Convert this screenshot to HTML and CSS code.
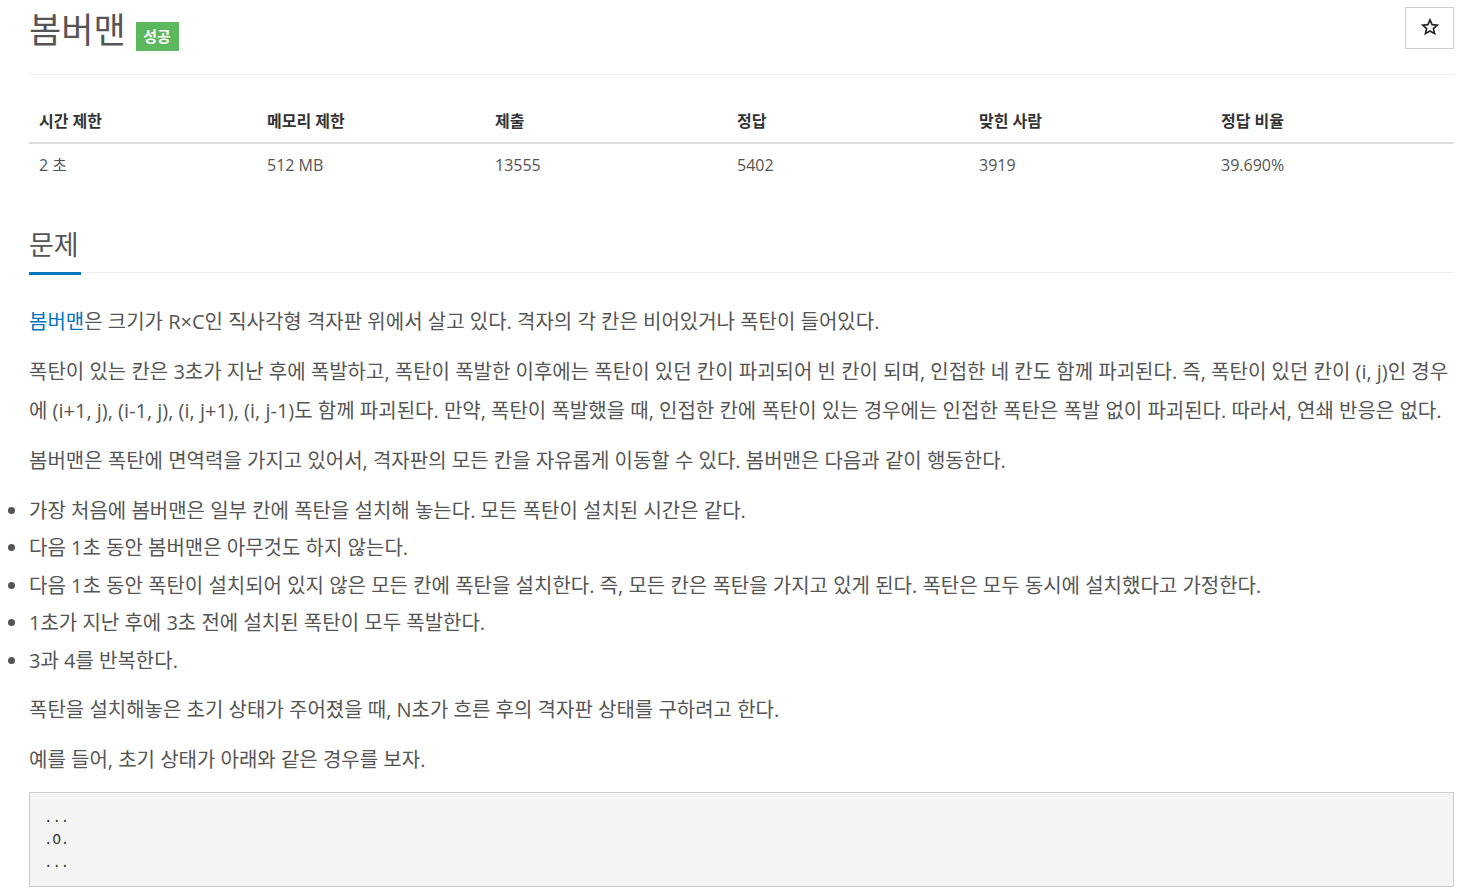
FILE: index.html
```html
<!DOCTYPE html>
<html lang="ko">
<head>
<meta charset="utf-8">
<title>봄버맨</title>
<link rel="stylesheet" href="styles.css">
</head>
<body>
<div class="page">
  <div class="header">
    <h1 class="title">봄버맨 <span class="badge">성공</span></h1>
    <button class="star" type="button"><svg width="18" height="18" viewBox="0 0 24 24"><path d="M12 2.5l2.8 6.4 6.9.6-5.2 4.6 1.6 6.8L12 17.3l-6.1 3.6 1.6-6.8-5.2-4.6 6.9-.6z" fill="none" stroke="#222" stroke-width="2.2" stroke-linejoin="miter"/></svg></button>
  </div>

  <table class="info">
    <thead>
      <tr>
        <th class="c1">시간 제한</th>
        <th class="c2">메모리 제한</th>
        <th class="c3">제출</th>
        <th class="c4">정답</th>
        <th class="c5">맞힌 사람</th>
        <th class="c6">정답 비율</th>
      </tr>
    </thead>
    <tbody>
      <tr>
        <td>2 초</td>
        <td>512 MB</td>
        <td>13555</td>
        <td>5402</td>
        <td>3919</td>
        <td>39.690%</td>
      </tr>
    </tbody>
  </table>

  <section class="problem">
    <div class="headline"><h2>문제</h2></div>
    <div class="body">
      <p><a class="link" href="#">봄버맨</a>은 크기가 R×C인 직사각형 격자판 위에서 살고 있다. 격자의 각 칸은 비어있거나 폭탄이 들어있다.</p>
      <p>폭탄이 있는 칸은 3초가 지난 후에 폭발하고, 폭탄이 폭발한 이후에는 폭탄이 있던 칸이 파괴되어 빈 칸이 되며, 인접한 네 칸도 함께 파괴된다. 즉, 폭탄이 있던 칸이 (i, j)인 경우에 (i+1, j), (i-1, j), (i, j+1), (i, j-1)도 함께 파괴된다. 만약, 폭탄이 폭발했을 때, 인접한 칸에 폭탄이 있는 경우에는 인접한 폭탄은 폭발 없이 파괴된다. 따라서, 연쇄 반응은 없다.</p>
      <p>봄버맨은 폭탄에 면역력을 가지고 있어서, 격자판의 모든 칸을 자유롭게 이동할 수 있다. 봄버맨은 다음과 같이 행동한다.</p>
      <ul>
        <li>가장 처음에 봄버맨은 일부 칸에 폭탄을 설치해 놓는다. 모든 폭탄이 설치된 시간은 같다.</li>
        <li>다음 1초 동안 봄버맨은 아무것도 하지 않는다.</li>
        <li>다음 1초 동안 폭탄이 설치되어 있지 않은 모든 칸에 폭탄을 설치한다. 즉, 모든 칸은 폭탄을 가지고 있게 된다. 폭탄은 모두 동시에 설치했다고 가정한다.</li>
        <li>1초가 지난 후에 3초 전에 설치된 폭탄이 모두 폭발한다.</li>
        <li>3과 4를 반복한다.</li>
      </ul>
      <p>폭탄을 설치해놓은 초기 상태가 주어졌을 때, N초가 흐른 후의 격자판 상태를 구하려고 한다.</p>
      <p>예를 들어, 초기 상태가 아래와 같은 경우를 보자.</p>
      <pre class="code">...
.O.
...</pre>
    </div>
  </section>
</div>
</body>
</html>
```

FILE: styles.css
```css
html, body {
  margin: 0;
  padding: 0;
  background: #fff;
}

body {
  font-family: "Open Sans", "Noto Sans CJK KR", sans-serif;
  color: #555;
}

.page {
  padding: 0 8px 0 29px;
}

.header {
  display: flex;
  justify-content: space-between;
  align-items: flex-start;
  height: 74px;
  border-bottom: 1px solid #eee;
}

.title {
  margin: 9px 0 0 0;
  font-size: 35px;
  line-height: 40px;
  font-weight: 400;
  color: #555;
  display: flex;
  align-items: center;
}

.badge {
  display: inline-block;
  margin-left: 10px;
  margin-top: 13px;
  width: 43px;
  height: 29px;
  line-height: 29px;
  text-align: center;
  background: #5cb85c;
  color: #fff;
  font-size: 15px;
  font-weight: 700;
}

.star {
  margin-top: 7px;
  width: 49px;
  height: 42px;
  border: 1px solid #ccc;
  background: #fff;
  padding: 0;
  display: flex;
  align-items: center;
  justify-content: center;
}

.star svg {
  display: block;
  margin-top: -2px;
}

.info {
  width: 100%;
  table-layout: fixed;
  border-collapse: collapse;
  margin-top: 26px;
}

.info th,
.info td {
  text-align: left;
  padding: 0 10px;
}

.info th {
  font-size: 16px;
  font-weight: 700;
  color: #333;
  line-height: 22px;
  padding-top: 9px;
  padding-bottom: 10px;
  border-bottom: 2px solid #ddd;
}

.info td {
  font-size: 16px;
  line-height: 22px;
  padding-top: 10px;
  padding-bottom: 10px;
}

.c1 { width: 208px; }
.c2 { width: 208px; }
.c3 { width: 222px; }
.c4 { width: 222px; }
.c5 { width: 222px; }

.problem {
  margin-top: 41px;
}

.headline {
  border-bottom: 1px solid #eee;
}

.headline h2 {
  display: inline-block;
  margin: 0 0 -3px 0;
  padding: 0 2px 9px 0;
  font-size: 27px;
  line-height: 36px;
  font-weight: 400;
  color: #555;
  border-bottom: 3px solid #0076c0;
  vertical-align: top;
}

.body {
  margin-top: 30px;
  font-size: 20px;
}

.body p {
  margin: 0 0 11.5px 0;
  line-height: 38.5px;
}

.link {
  color: #0076c0;
  text-decoration: none;
}

.body ul {
  margin: 0 0 11.5px 0;
  padding: 0;
  list-style: disc outside;
}

.body li {
  line-height: 37.5px;
}

.code {
  margin: 12.5px 0 0 0;
  padding: 14px 14px 12px 14px;
  background: #f4f4f4;
  border: 1px solid #ccc;
  font-family: "Liberation Mono", monospace;
  font-size: 14px;
  line-height: 22.5px;
  color: #333;
}
```
